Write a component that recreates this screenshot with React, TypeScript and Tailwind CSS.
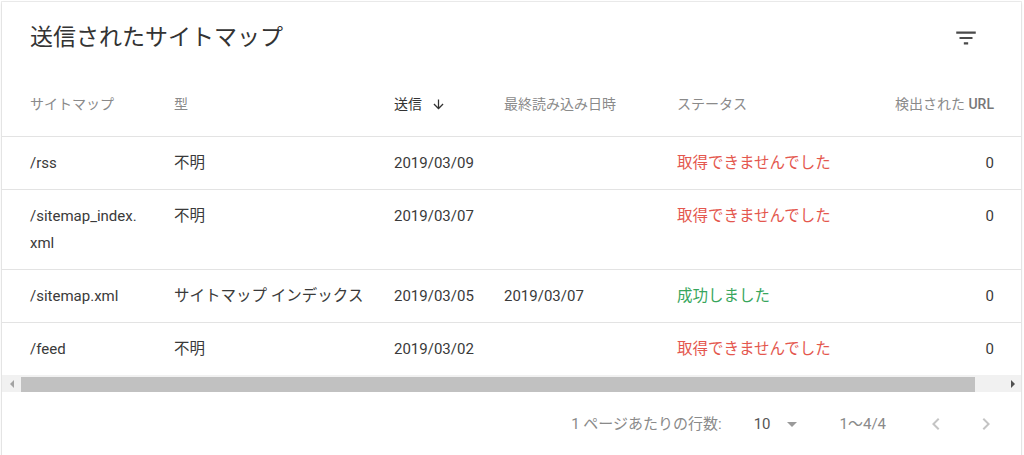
import React from "react";

type Row = {
  path: React.ReactNode;
  type: string;
  submitted: string;
  lastRead: string;
  status: string;
  ok: boolean;
  urls: number;
};

const ROWS: Row[] = [
  { path: "/rss", type: "不明", submitted: "2019/03/09", lastRead: "", status: "取得できませんでした", ok: false, urls: 0 },
  {
    path: (
      <>
        /sitemap_index.
        <br />
        xml
      </>
    ),
    type: "不明",
    submitted: "2019/03/07",
    lastRead: "",
    status: "取得できませんでした",
    ok: false,
    urls: 0,
  },
  { path: "/sitemap.xml", type: "サイトマップ インデックス", submitted: "2019/03/05", lastRead: "2019/03/07", status: "成功しました", ok: true, urls: 0 },
  { path: "/feed", type: "不明", submitted: "2019/03/02", lastRead: "", status: "取得できませんでした", ok: false, urls: 0 },
];

// 列幅: サイトマップ / 型 / 送信 / 最終読み込み日時 / ステータス / 検出された URL
const cols = "grid grid-cols-[144px_220px_110px_173px_1fr_auto] pl-[28px] pr-[27px]";

function FilterIcon() {
  return (
    <svg width="26" height="26" viewBox="0 0 24 24" fill="#4a4a4a">
      <path d="M10 18h4v-2h-4v2zM3 6v2h18V6H3zm3 7h12v-2H6v2z" />
    </svg>
  );
}

function ArrowDown() {
  return (
    <svg width="15" height="15" viewBox="0 0 24 24" fill="#333">
      <path d="M20 12l-1.41-1.41L13 16.17V4h-2v12.17l-5.58-5.59L4 12l8 8 8-8z" />
    </svg>
  );
}

function Chevron({ dir }: { dir: "left" | "right" }) {
  return (
    <svg width="24" height="24" viewBox="0 0 24 24" fill="#c4c4c4">
      {dir === "left" ? (
        <path d="M15.41 7.41L14 6l-6 6 6 6 1.41-1.41L10.83 12z" />
      ) : (
        <path d="M8.59 16.59L10 18l6-6-6-6-1.41 1.41L13.17 12z" />
      )}
    </svg>
  );
}

export default function App() {
  return (
    <div
      className="h-[455px] w-[1024px] overflow-hidden bg-white pt-[2px]"
      style={{ fontFamily: "Roboto, 'Noto Sans CJK JP', sans-serif" }}
    >
      <div className="ml-[2px] w-[1019px] bg-white shadow-[0_0_0_1px_rgba(0,0,0,0.07),0_1px_3px_rgba(0,0,0,0.1)]">
        {/* タイトル */}
        <div className="flex h-[69px] items-center justify-between pl-[28px] pr-[42px] pt-[2px]">
          <h1 className="text-[23px] leading-none text-[#333]">送信されたサイトマップ</h1>
          <FilterIcon />
        </div>

        {/* ヘッダー */}
        <div className={`${cols} h-[66px] items-center border-b border-[#e3e3e3] pt-[1px] text-[14px] text-[#8a8a8a]`}>
          <div>サイトマップ</div>
          <div>型</div>
          <div className="flex items-center gap-[9px] text-[#333]">
            送信
            <ArrowDown />
          </div>
          <div>最終読み込み日時</div>
          <div>ステータス</div>
          <div className="text-right">
            検出された <span className="font-medium text-[#777]">URL</span>
          </div>
        </div>

        {/* 行 */}
        {ROWS.map((r, i) => (
          <div
            key={i}
            className={`${cols} pt-[13px] pb-[12px] text-[15px] leading-[27px] text-[#3a3a3a] ${
              i < ROWS.length - 1 ? "border-b border-[#e3e3e3]" : ""
            }`}
          >
            <div>{r.path}</div>
            <div className="text-[15.5px]">{r.type}</div>
            <div>{r.submitted}</div>
            <div>{r.lastRead}</div>
            <div className={`text-[15.5px] ${r.ok ? "text-[#38a65c]" : "text-[#e4574e]"}`}>{r.status}</div>
            <div className="text-right">{r.urls}</div>
          </div>
        ))}

        {/* 横スクロールバー */}
        <div className="flex h-[17px] items-stretch bg-[#f1f1f1]">
          <div className="flex w-[19px] items-center justify-center">
            <div className="h-0 w-0 border-y-[4px] border-r-[4px] border-y-transparent border-r-[#a3a3a3]" />
          </div>
          <div className="mt-[2px] w-[954px] bg-[#c1c1c1]" />
          <div className="flex-1" />
          <div className="flex w-[17px] items-center justify-center">
            <div className="h-0 w-0 border-y-[4px] border-l-[4px] border-y-transparent border-l-[#505050]" />
          </div>
        </div>

        {/* ページ送り */}
        <div className="flex h-[64px] items-center justify-end pr-[23px] text-[15px] text-[#8a8a8a]">
          <span>1 ページあたりの行数:</span>
          <span className="ml-[32px] text-[#555]">10</span>
          <svg className="ml-[9px]" width="24" height="24" viewBox="0 0 24 24" fill="#9a9a9a">
            <path d="M7 10l5 5 5-5z" />
          </svg>
          <span className="ml-[36px]">1〜4/4</span>
          <div className="ml-[38px]">
            <Chevron dir="left" />
          </div>
          <div className="ml-[26px]">
            <Chevron dir="right" />
          </div>
        </div>
      </div>
    </div>
  );
}
